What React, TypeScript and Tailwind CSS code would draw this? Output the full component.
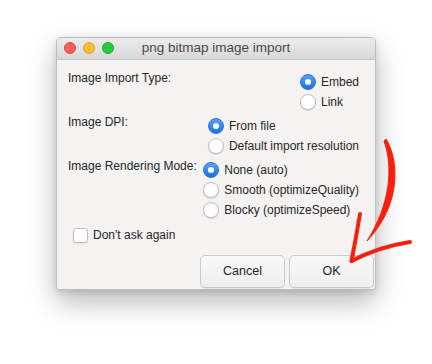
import React from 'react';

type Opt = { label: string; checked?: boolean };

const groups: { title: string; options: Opt[] }[] = [
    { title: 'Image Import Type:', options: [{ label: 'Embed', checked: true }, { label: 'Link' }] },
    { title: 'Image DPI:', options: [{ label: 'From file', checked: true }, { label: 'Default import resolution' }] },
    {
        title: 'Image Rendering Mode:',
        options: [
            { label: 'None (auto)', checked: true },
            { label: 'Smooth (optimizeQuality)' },
            { label: 'Blocky (optimizeSpeed)' },
        ],
    },
];

const Radio: React.FC<{ checked?: boolean }> = ({ checked }) =>
    checked ? (
        <span className="flex h-4 w-4 shrink-0 items-center justify-center rounded-full border border-[#2b6fd6] bg-gradient-to-b from-[#54a2fa] to-[#1c6fe4]">
            <span className="h-[6px] w-[6px] rounded-full bg-white" />
        </span>
    ) : (
        <span className="h-4 w-4 shrink-0 rounded-full border border-[#bdbdbd] bg-white shadow-[0_1px_1px_rgba(0,0,0,0.12)]" />
    );

const Button: React.FC<{ children: React.ReactNode }> = ({ children }) => (
    <button className="flex h-[33px] w-[85px] items-center justify-center rounded-[5px] border border-[#c9c9c9] bg-gradient-to-b from-[#f8f8f8] to-[#eeeeee] text-[12.5px] text-[#262626] shadow-[0_1px_1px_rgba(0,0,0,0.06)]">
        {children}
    </button>
);

export default function App() {
    return (
        <div className="relative h-[364px] w-[432px] bg-white pl-[56px] pt-[37px] font-['Liberation_Sans',Arial,sans-serif] text-[#262626]">
            <div className="flex h-[253px] w-[320px] flex-col overflow-hidden rounded-t-[5px] rounded-b-[3px] border border-[#bdbdbd] bg-[#f4f3f2] shadow-[0_12px_28px_rgba(0,0,0,0.28),0_2px_6px_rgba(0,0,0,0.12)]">
                {/* title bar */}
                <div className="relative flex h-[22px] items-center justify-center border-b border-[#c4c4c4] bg-gradient-to-b from-[#ececec] to-[#d7d7d7]">
                    <div className="absolute left-[7px] top-[4px] flex gap-[7px]">
                        <span className="h-3 w-3 rounded-full border border-[#e2463f] bg-[#fc605a]" />
                        <span className="h-3 w-3 rounded-full border border-[#dfa026] bg-[#fdbd30]" />
                        <span className="h-3 w-3 rounded-full border border-[#1dad2c] bg-[#2ac841]" />
                    </div>
                    <span className="whitespace-nowrap text-[13.5px] text-[#4b4b4b]">png bitmap image import</span>
                </div>

                {/* body */}
                <div className="flex flex-1 flex-col pl-[11px] pr-[16px] pt-[10px]">
                    <div className="flex flex-col gap-[2px]">
                        {groups.map((g) => (
                            <div key={g.title} className="flex items-start justify-between">
                                <span className="whitespace-nowrap text-[12px] leading-4">{g.title}</span>
                                <div className="mt-[2px] flex flex-col">
                                    {g.options.map((o) => (
                                        <label key={o.label} className="flex h-5 items-center gap-[5px] whitespace-nowrap text-[12px]">
                                            <Radio checked={o.checked} />
                                            {o.label}
                                        </label>
                                    ))}
                                </div>
                            </div>
                        ))}
                    </div>

                    <label className="mt-[6px] flex items-center gap-[5px] pl-[5px] text-[12px]">
                        <span className="h-[15px] w-[15px] rounded-[3px] border border-[#bdbdbd] bg-white shadow-[0_1px_1px_rgba(0,0,0,0.08)]" />
                        Don't ask again
                    </label>

                    <div className="-mr-[15px] mt-auto flex justify-end gap-[4px] pb-[1px]">
                        <Button>Cancel</Button>
                        <Button>OK</Button>
                    </div>
                </div>
            </div>

            {/* red hand-drawn arrow */}
            <svg className="pointer-events-none absolute left-0 top-0" width="432" height="364" viewBox="0 0 432 364">
                <path d="M386,139 C399,160 402,204 367,241 C391,203 393,166 384,141 Z" fill="#f8200c" stroke="#f8200c" strokeWidth="1" strokeLinejoin="round" />
                <path d="M360,214 Q356,238 351.5,261" stroke="#f8200c" strokeWidth="4" strokeLinecap="round" fill="none" />
                <path d="M351.5,261 Q378,247 410,242" stroke="#f8200c" strokeWidth="4" strokeLinecap="round" fill="none" />
            </svg>
        </div>
    );
}
